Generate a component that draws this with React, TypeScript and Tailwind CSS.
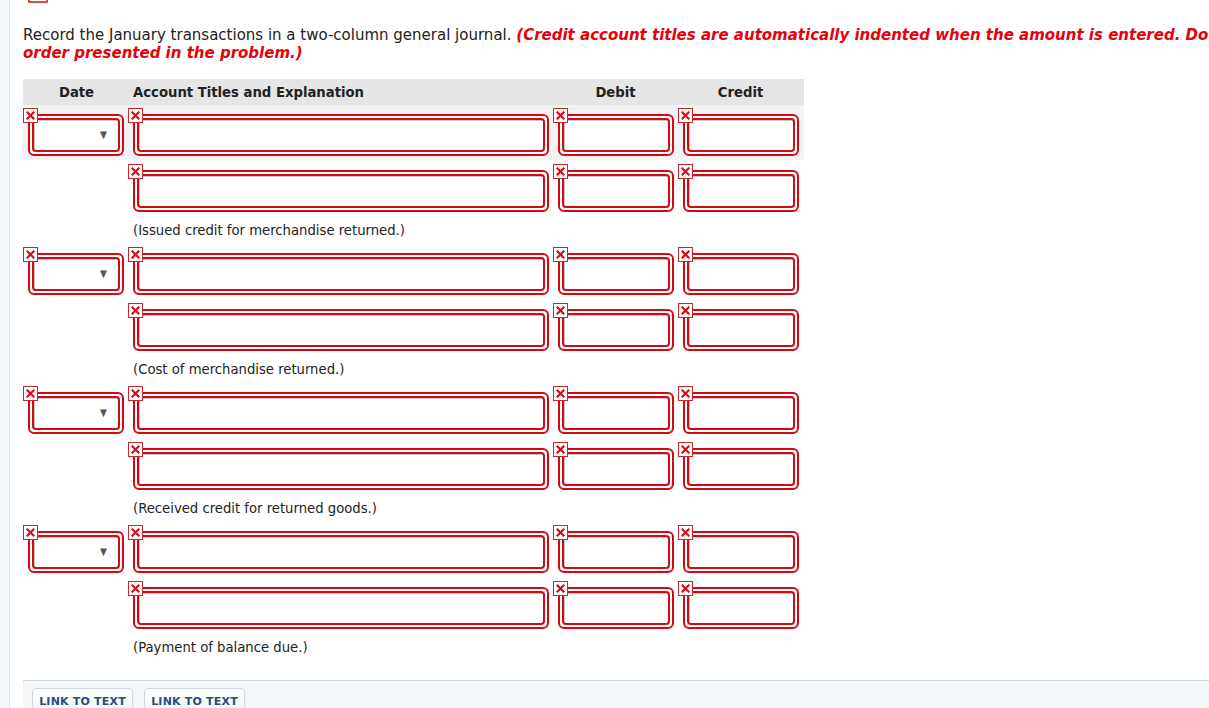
import React from "react";

const groups = [
  "(Issued credit for merchandise returned.)",
  "(Cost of merchandise returned.)",
  "(Received credit for returned goods.)",
  "(Payment of balance due.)",
];

function Marker() {
  return (
    <div className="absolute -left-[5px] -top-[6px] z-10 w-[15px] h-[15px] bg-white border border-[#c8282c] flex items-center justify-center">
      <svg width="9" height="9" viewBox="0 0 9 9">
        <path d="M1.5 1.5 L7.5 7.5 M7.5 1.5 L1.5 7.5" stroke="#d40f1c" strokeWidth="2.2" strokeLinecap="square" />
      </svg>
    </div>
  );
}

function Box({ width, select }: { width: string; select?: boolean }) {
  return (
    <div className={`relative h-[42px] ${width} shrink-0`}>
      <Marker />
      <div className="h-full w-full rounded-[6px] border-2 border-[#d10a14] p-[2px] bg-white">
        <div className="h-full w-full rounded-[4px] border-2 border-[#d10a14] bg-white shadow-[inset_1px_1px_0_#c8c8c8] flex items-center justify-end pr-[11px]">
          {select && <span className="text-[10px] text-[#555] leading-none">▼</span>}
        </div>
      </div>
    </div>
  );
}

export default function App() {
  return (
    <div className="flex min-h-[708px] bg-white overflow-hidden" style={{ fontFamily: "'DejaVu Sans', Verdana, sans-serif" }}>
      <div className="w-[10px] shrink-0 bg-[#f5f8fb] border-r border-[#dfe5ec]" />
      <div className="flex-1 flex flex-col min-w-0">
        <div className="pl-[18px] h-[4px] overflow-visible">
          <div className="w-[20px] h-[20px] -mt-[17px] border-2 border-[#d84c4c] bg-white" />
        </div>
        <div className="pl-[13px] pt-[22px] text-[15px] leading-[18px] text-[#222] whitespace-nowrap">
          Record the January transactions in a two-column general journal.{" "}
          <span className="text-[#e8000b] font-bold italic">
            (Credit account titles are automatically indented when the amount is entered. Do
          </span>
          <br />
          <span className="text-[#e8000b] font-bold italic">order presented in the problem.)</span>
        </div>

        <div className="ml-[13px] mt-[17px] w-[781px]" style={{ fontFamily: "'DejaVu Sans Condensed', Tahoma, 'Liberation Sans', sans-serif" }}>
          <div className="h-[26px] bg-[#e5e5e5] flex items-center text-[14.7px] font-bold text-[#222]">
            <div className="w-[105px] text-center pl-[2px]">Date</div>
            <div className="w-[425px] pl-[5px]">Account Titles and Explanation</div>
            <div className="w-[125px] text-center">Debit</div>
            <div className="w-[125px] text-center">Credit</div>
          </div>

          {groups.map((exp, i) => (
            <div key={i}>
              <div className={`flex gap-[9px] pl-[5px] pt-[9px] pb-[4px] ${i === 0 ? "bg-[#f3f3f3]" : ""}`}>
                <Box width="w-[96px]" select />
                <Box width="w-[416px]" />
                <Box width="w-[116px]" />
                <Box width="w-[116px]" />
              </div>
              <div className="flex gap-[9px] pl-[110px] pt-[10px]">
                <Box width="w-[416px]" />
                <Box width="w-[116px]" />
                <Box width="w-[116px]" />
              </div>
              <div className="h-[32px] pt-[4px] pl-[110px] flex items-center text-[14.7px] text-[#222]">{exp}</div>
            </div>
          ))}
        </div>

        <div className="ml-[13px] mt-[19px] flex-1 border-t border-[#cfd6de] bg-[#f4f7fa] flex gap-[11px] pl-[9px] pt-[7px]">
          {["LINK TO TEXT", "LINK TO TEXT"].map((t, i) => (
            <div
              key={i}
              className="h-[30px] w-[101px] rounded-t-[4px] border border-[#cdd5de] bg-gradient-to-b from-white to-[#eef2f6] text-[11px] font-bold text-[#2c4d7c] flex items-start justify-center pt-[5px] tracking-[0.2px]"
            >
              {t}
            </div>
          ))}
        </div>
      </div>
    </div>
  );
}
